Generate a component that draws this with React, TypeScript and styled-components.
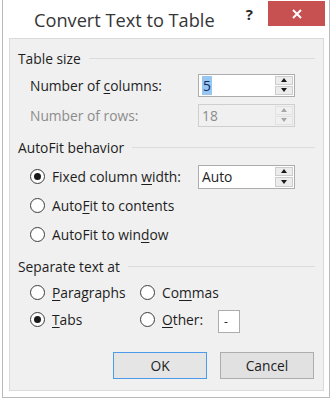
import React from 'react';
import styled, { createGlobalStyle, css } from 'styled-components';

const GlobalStyle = createGlobalStyle`
    body {
        margin: 0;
        background: #ffffff;
        font-family: "Open Sans", "Noto Sans", sans-serif;
        color: #1e1e1e;
    }
`;

const Window = styled.div`
    box-sizing: border-box;
    margin-left: 2px;
    width: 328px;
    height: 398px;
    border: 1px solid #b9b9b9;
    border-top: none;
    background: #ffffff;
    padding: 0 5px 6px 6px;
    display: flex;
    flex-direction: column;
`;

const TitleBar = styled.div`
    height: 38px;
    display: flex;
    align-items: flex-start;
    flex-shrink: 0;
`;

const Title = styled.div`
    margin: 8px 0 0 25px;
    font-size: 18.2px;
    line-height: 24px;
    color: #363636;
`;

const Help = styled.div`
    margin: 5px 15px 0 auto;
    font-size: 15px;
    line-height: 18px;
    font-weight: 700;
    color: #2a2a2a;
`;

const Close = styled.div`
    width: 57px;
    height: 25px;
    margin: 1px -1px 0 0;
    flex-shrink: 0;
    background: #c75050;
    color: #ffffff;
    display: flex;
    align-items: center;
    justify-content: center;
`;

const Panel = styled.div`
    flex: 1;
    background: #f0f0f0;
    border: 1px solid #dadada;
    padding: 9px 8px 0 8px;
    display: flex;
    flex-direction: column;
`;

const GroupHeader = styled.div<{ $top?: number }>`
    display: flex;
    align-items: center;
    height: 20px;
    margin-top: ${(p) => p.$top ?? 0}px;
    font-size: 13.8px;
    color: #1e1e1e;
    white-space: nowrap;
    &::after {
        content: '';
        flex: 1;
        height: 1px;
        margin: 0 0 0 8px;
        background: #dcdcdc;
    }
`;

const Row = styled.div<{ $h: number; $top?: number }>`
    display: flex;
    align-items: center;
    height: ${(p) => p.$h}px;
    margin-top: ${(p) => p.$top ?? 0}px;
    padding-left: 12px;
    font-size: 13.8px;
    white-space: nowrap;
`;

const Label = styled.span<{ $w?: number; $disabled?: boolean }>`
    display: inline-block;
    width: ${(p) => (p.$w ? `${p.$w}px` : 'auto')};
    color: ${(p) => (p.$disabled ? '#8c8c8c' : '#1e1e1e')};
    u {
        text-underline-offset: 2px;
    }
`;

const Option = styled.div<{ $w?: number }>`
    display: flex;
    align-items: center;
    width: ${(p) => (p.$w ? `${p.$w}px` : 'auto')};
`;

const RadioCircle = styled.span<{ $checked?: boolean }>`
    box-sizing: border-box;
    width: 15px;
    height: 15px;
    margin-right: 7px;
    border-radius: 50%;
    border: 1px solid #3c3c3c;
    background: #ffffff;
    display: flex;
    align-items: center;
    justify-content: center;
    flex-shrink: 0;
    ${(p) =>
        p.$checked &&
        css`
            &::after {
                content: '';
                width: 7px;
                height: 7px;
                border-radius: 50%;
                background: #1a1a1a;
            }
        `}
`;

const SpinBox = styled.div<{ $disabled?: boolean; $h?: number }>`
    box-sizing: border-box;
    width: 97px;
    height: ${(p) => p.$h ?? 23}px;
    display: flex;
    border: 1px solid ${(p) => (p.$disabled ? '#cfcfcf' : '#acacac')};
    background: ${(p) => (p.$disabled ? '#f0f0f0' : '#ffffff')};
`;

const SpinText = styled.div<{ $disabled?: boolean }>`
    flex: 1;
    display: flex;
    align-items: center;
    padding-left: 3px;
    color: ${(p) => (p.$disabled ? '#8c8c8c' : '#1e1e1e')};
`;

const Selected = styled.span`
    background: #99c6f0;
    color: #0d2b66;
    padding: 0 1px;
`;

const SpinButtons = styled.div`
    width: 18px;
    display: flex;
    flex-direction: column;
    gap: 1px;
    padding: 1px;
`;

const Arrow = styled.div<{ $down?: boolean; $disabled?: boolean }>`
    flex: 1;
    display: flex;
    align-items: center;
    justify-content: center;
    background: ${(p) => (p.$disabled ? '#f0f0f0' : '#ececec')};
    border: 1px solid ${(p) => (p.$disabled ? '#e2e2e2' : '#cdcdcd')};
    &::after {
        content: '';
        border-left: 3.5px solid transparent;
        border-right: 3.5px solid transparent;
        ${(p) => (p.$down ? 'border-top' : 'border-bottom')}: 4px solid
            ${(p) => (p.$disabled ? '#a6a6a6' : '#1a1a1a')};
    }
`;

const SmallBox = styled.div`
    box-sizing: border-box;
    width: 22px;
    height: 23px;
    margin-top: 3px;
    border: 1px solid #acacac;
    background: #ffffff;
    padding-left: 5px;
    display: flex;
    align-items: center;
    font-size: 12px;
`;

const ButtonRow = styled.div`
    display: flex;
    justify-content: flex-end;
    gap: 13px;
    margin-top: 19px;
    padding-right: 1px;
`;

const Button = styled.button<{ $default?: boolean }>`
    width: 94px;
    height: 27px;
    font-family: inherit;
    font-size: 13.8px;
    color: #1e1e1e;
    background: ${(p) => (p.$default ? '#e5e5e5' : '#e1e1e1')};
    border: 1px solid ${(p) => (p.$default ? '#4a9cea' : '#adadad')};
    padding: 0;
`;

function Spin({ value, disabled, selected, h }: { value: string; disabled?: boolean; selected?: boolean; h?: number }) {
    return (
        <SpinBox $disabled={disabled} $h={h}>
            <SpinText $disabled={disabled}>{selected ? <Selected>{value}</Selected> : value}</SpinText>
            <SpinButtons>
                <Arrow $disabled={disabled} />
                <Arrow $down $disabled={disabled} />
            </SpinButtons>
        </SpinBox>
    );
}

function App() {
    return (
        <>
            <GlobalStyle />
            <Window>
                <TitleBar>
                    <Title>Convert Text to Table</Title>
                    <Help>?</Help>
                    <Close>
                        <svg width="10" height="10" viewBox="0 0 10 10">
                            <path d="M1 1 L9 9 M9 1 L1 9" stroke="#fff" strokeWidth="2" />
                        </svg>
                    </Close>
                </TitleBar>
                <Panel>
                    <GroupHeader>Table size</GroupHeader>
                    <Row $h={30} $top={2}>
                        <Label $w={168}>
                            Number of <u>c</u>olumns:
                        </Label>
                        <Spin value="5" selected />
                    </Row>
                    <Row $h={30}>
                        <Label $w={168} $disabled>
                            Number of rows:
                        </Label>
                        <Spin value="18" disabled />
                    </Row>

                    <GroupHeader $top={7}>AutoFit behavior</GroupHeader>
                    <Row $h={29} $top={5}>
                        <RadioCircle $checked />
                        <Label $w={146}>
                            Fixed column <u>w</u>idth:
                        </Label>
                        <Spin value="Auto" h={24} />
                    </Row>
                    <Row $h={29}>
                        <RadioCircle />
                        <Label>
                            Auto<u>F</u>it to contents
                        </Label>
                    </Row>
                    <Row $h={29}>
                        <RadioCircle />
                        <Label>
                            AutoFit to win<u>d</u>ow
                        </Label>
                    </Row>

                    <GroupHeader $top={7}>Separate text at</GroupHeader>
                    <Row $h={27} $top={3}>
                        <Option $w={110}>
                            <RadioCircle />
                            <Label>
                                <u>P</u>aragraphs
                            </Label>
                        </Option>
                        <Option>
                            <RadioCircle />
                            <Label>
                                Co<u>m</u>mas
                            </Label>
                        </Option>
                    </Row>
                    <Row $h={27}>
                        <Option $w={110}>
                            <RadioCircle $checked />
                            <Label>
                                <u>T</u>abs
                            </Label>
                        </Option>
                        <Option>
                            <RadioCircle />
                            <Label $w={56}>
                                <u>O</u>ther:
                            </Label>
                            <SmallBox>-</SmallBox>
                        </Option>
                    </Row>

                    <ButtonRow>
                        <Button $default>OK</Button>
                        <Button>Cancel</Button>
                    </ButtonRow>
                </Panel>
            </Window>
        </>
    );
}

export default App;
